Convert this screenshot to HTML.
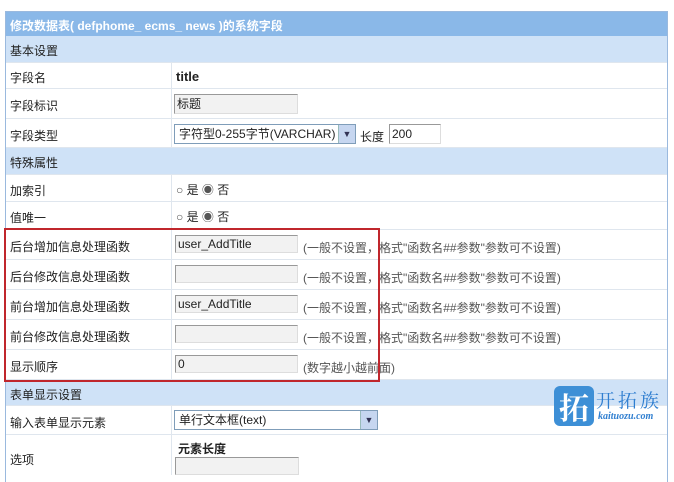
<!DOCTYPE html>
<html><head><meta charset="utf-8"><style>
body{margin:0;width:674px;height:467px;overflow:hidden;background:#fff;font-family:"Liberation Sans","Noto Sans CJK SC",sans-serif;font-size:12px;color:#222;position:relative}
.t{position:absolute;left:5px;top:11px;width:661px;height:470px;border:1px solid #9ab9de;border-bottom:none}
.r{position:absolute;left:6px;width:661px;border-bottom:1px solid #dfe6ee;box-sizing:border-box}
.l{position:absolute;left:4px}
.v{position:absolute;left:170px}
.sep{position:absolute;left:165px;top:0;bottom:0;border-left:1px solid #dfe6ee}
.sec{background:#cfe2f7}
.in{position:absolute;height:18px;border:1px solid #999;border-right-color:#ddd;border-bottom-color:#ddd;background:#f2f2f2;box-sizing:border-box;font-size:12px;line-height:16px;padding-left:2px}
.sel{position:absolute;height:20px;border:1px solid #7f9db9;background:#fff;box-sizing:border-box;line-height:18px;padding-left:4px}
.arr{position:absolute;right:0;top:0;width:16px;height:18px;background:#c6d6f0;border-left:1px solid #9bb;font-size:9px;text-align:center;line-height:18px;color:#335}
.g{color:#555}
</style></head><body>
<div class="t"></div>
<div class="r" style="top:12px;height:24px;background:#8ab8e8;color:#fff;font-weight:bold;border:none"><span class="l" style="top:5px">修改数据表( defphome_ ecms_ news )的系统字段</span></div>
<div class="r sec" style="top:36px;height:27px"><span class="l" style="top:6px">基本设置</span></div>
<div class="r" style="top:63px;height:26px"><div class="sep"></div><span class="l" style="top:6px">字段名</span><b class="v" style="top:6px;font-size:13px">title</b></div>
<div class="r" style="top:89px;height:30px"><div class="sep"></div><span class="l" style="top:8px">字段标识</span><div class="in" style="left:168px;top:5px;width:124px;height:20px;line-height:18px">标题</div></div>
<div class="r" style="top:119px;height:29px"><div class="sep"></div><span class="l" style="top:8px">字段类型</span><div class="sel" style="left:168px;top:5px;width:182px">字符型0-255字节(VARCHAR)<div class="arr">▼</div></div><span style="position:absolute;left:354px;top:9px">长度</span><div class="in" style="left:383px;top:5px;width:52px;height:20px;line-height:18px;background:#fff">200</div></div>
<div class="r sec" style="top:148px;height:27px"><span class="l" style="top:6px">特殊属性</span></div>
<div class="r" style="top:175px;height:27px"><div class="sep"></div><span class="l" style="top:7px">加索引</span><span class="v" style="top:6px"><span class="g">○</span> 是 <span class="g">◉</span> 否</span></div>
<div class="r" style="top:202px;height:28px"><div class="sep"></div><span class="l" style="top:7px">值唯一</span><span class="v" style="top:6px"><span class="g">○</span> 是 <span class="g">◉</span> 否</span></div>
<div class="r" style="top:230px;height:30px"><div class="sep"></div><span class="l" style="top:8px">后台增加信息处理函数</span><div class="in" style="left:169px;top:5px;width:123px">user_AddTitle</div><span class="g" style="position:absolute;left:297px;top:9px">(一般不设置，格式"函数名##参数"参数可不设置)</span></div>
<div class="r" style="top:260px;height:30px"><div class="sep"></div><span class="l" style="top:8px">后台修改信息处理函数</span><div class="in" style="left:169px;top:5px;width:123px"></div><span class="g" style="position:absolute;left:297px;top:9px">(一般不设置，格式"函数名##参数"参数可不设置)</span></div>
<div class="r" style="top:290px;height:30px"><div class="sep"></div><span class="l" style="top:8px">前台增加信息处理函数</span><div class="in" style="left:169px;top:5px;width:123px">user_AddTitle</div><span class="g" style="position:absolute;left:297px;top:9px">(一般不设置，格式"函数名##参数"参数可不设置)</span></div>
<div class="r" style="top:320px;height:30px"><div class="sep"></div><span class="l" style="top:8px">前台修改信息处理函数</span><div class="in" style="left:169px;top:5px;width:123px"></div><span class="g" style="position:absolute;left:297px;top:9px">(一般不设置，格式"函数名##参数"参数可不设置)</span></div>
<div class="r" style="top:350px;height:30px"><div class="sep"></div><span class="l" style="top:8px">显示顺序</span><div class="in" style="left:169px;top:5px;width:123px">0</div><span class="g" style="position:absolute;left:297px;top:9px">(数字越小越前面)</span></div>
<div class="r sec" style="top:380px;height:26px"><span class="l" style="top:6px">表单显示设置</span></div>
<div class="r" style="top:406px;height:29px"><div class="sep"></div><span class="l" style="top:8px">输入表单显示元素</span><div class="sel" style="left:168px;top:4px;width:204px">单行文本框(text)<div class="arr">▼</div></div></div>
<div class="r" style="top:435px;height:40px;border:none"><div class="sep"></div><span class="l" style="top:16px">选项</span><b class="v" style="top:5px;left:172px">元素长度</b><div class="in" style="left:169px;top:22px;width:124px"></div></div>
<div style="position:absolute;left:4px;top:228px;width:372px;height:150px;border:2px solid #c0262c"></div>
<div style="position:absolute;left:554px;top:386px;width:40px;height:40px;background:#3d8fd6;border-radius:6px;color:#fff;font-size:30px;font-weight:bold;line-height:40px;text-align:center;font-family:'Noto Serif CJK SC',serif">拓</div>
<div style="position:absolute;left:596px;top:386px;color:#2f7ed0;font-size:19px;letter-spacing:3px;font-family:'Noto Serif CJK SC',serif">开拓族</div>
<div style="position:absolute;left:598px;top:411px;color:#2f7ed0;font-size:10px;font-style:italic;font-weight:bold;font-family:'Liberation Serif',serif">kaituozu.com</div>
</body></html>
